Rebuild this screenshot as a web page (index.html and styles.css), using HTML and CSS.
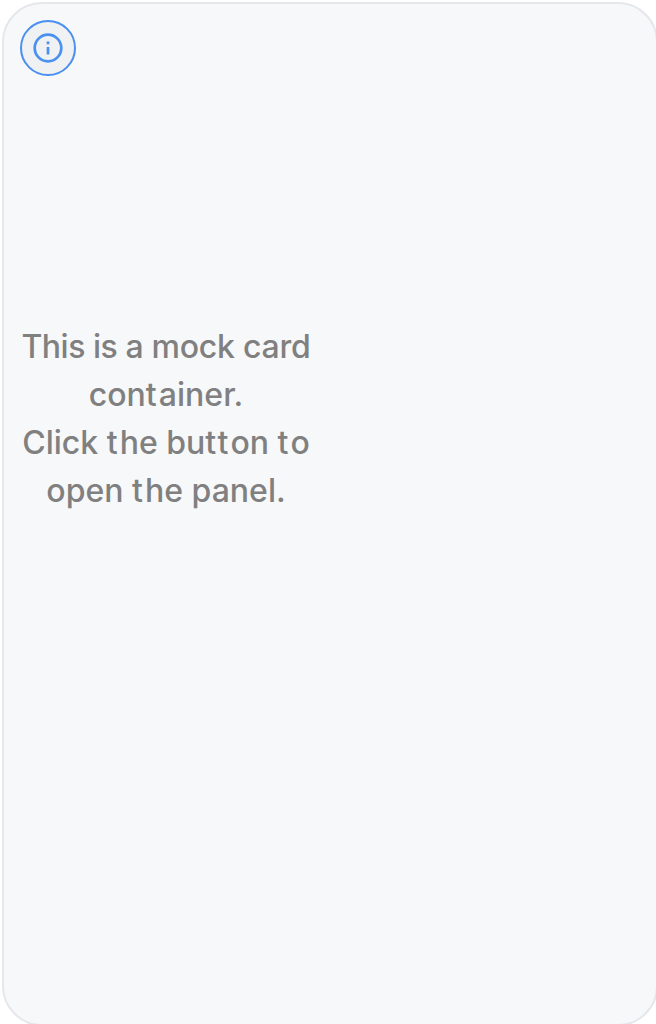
FILE: index.html
```html
<!DOCTYPE html>
<html lang="en">
<head>
<meta charset="utf-8">
<title>Card</title>
<link rel="stylesheet" href="styles.css">
</head>
<body>
<main class="card">
  <button class="info-button" type="button" aria-label="Open panel">
    <svg class="info-icon" viewBox="0 0 32 32" fill="none" stroke="currentColor" stroke-width="2.7">
      <circle cx="16" cy="16" r="13.3"/>
      <path d="M16 15v7.5M16 9.5v2.7"/>
    </svg>
  </button>
  <p class="message"><span class="tight">This is </span><span class="snug">a mock card</span><br>con<span class="wide">t</span>ainer.<br>Click <span class="wide">t</span>he bu<span class="wide">tt</span>on <span class="wide">t</span>o<br>open <span class="wide">t</span>he panel.</p>
</main>
</body>
</html>
```
FILE: styles.css
```css
body {
  margin: 0;
  background: #fff;
  overflow: hidden;
}

.card {
  box-sizing: border-box;
  width: 656px;
  height: 1024px;
  margin: 2px 0 0 2px;
  padding: 16px;
  border: 2px solid #e5e7eb;
  border-radius: 40px;
  background: #f7f8fa;
}

.info-button {
  box-sizing: border-box;
  display: flex;
  align-items: center;
  justify-content: center;
  width: 56px;
  height: 56px;
  padding: 0;
  border: 2px solid #4a90f0;
  border-radius: 50%;
  background: #f0f1f3;
  color: #4a90f0;
}

.info-icon {
  width: 32px;
  height: 32px;
}

.message {
  width: 292px;
  margin: 247px 0 0;
  color: #808080;
  font: 500 32px/48px Inter, sans-serif;
  text-align: center;
  white-space: nowrap;
}

.tight {
  letter-spacing: -0.48px;
}

.snug {
  letter-spacing: -0.24px;
}

.wide {
  letter-spacing: 2.1px;
}
```
